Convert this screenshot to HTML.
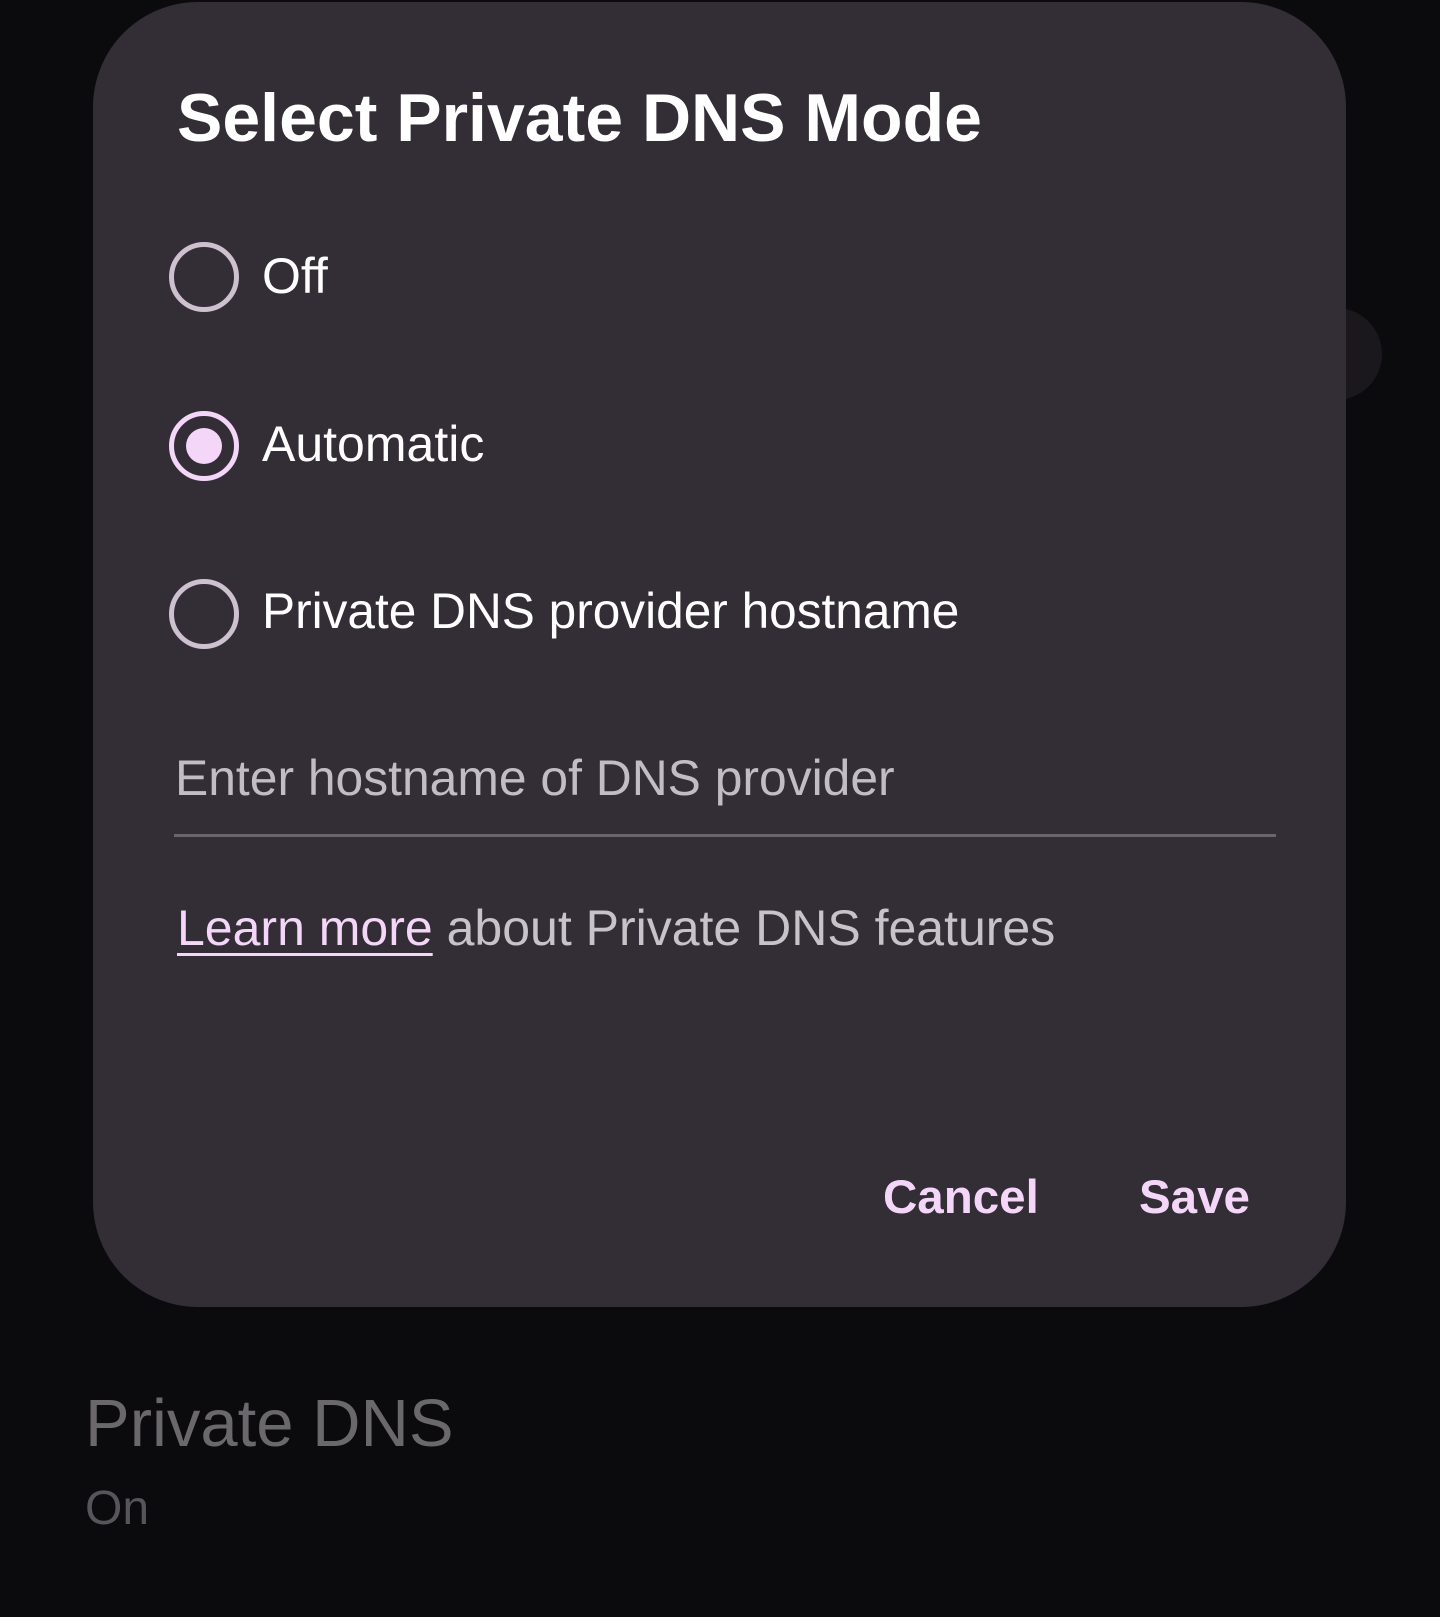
<!DOCTYPE html>
<html><head><style>
html,body{margin:0;padding:0;}
body{width:1440px;height:1617px;background:#0b0a0d;position:relative;overflow:hidden;font-family:"Liberation Sans",sans-serif;}
.t{position:absolute;white-space:nowrap;line-height:1;}
.dlg{position:absolute;left:93px;top:2px;width:1253px;height:1305px;background:#332d36;border-radius:105px;}
.r{position:absolute;width:70px;height:70px;border:5px solid #cdc0cf;border-radius:50%;box-sizing:border-box;}
</style></head><body>
<div style="position:absolute;left:1290px;top:308px;width:92px;height:92px;border-radius:50%;background:#1a181c"></div>
<div class="dlg"></div>
<div class="t" style="left:177px;top:84px;font-size:68px;color:#fff;font-weight:bold;">Select Private DNS Mode</div>

<div class="r" style="left:169px;top:242px;"></div>
<div class="t" style="left:262px;top:251px;font-size:50px;color:#fff;">Off</div>

<div class="r" style="left:169px;top:411px;border-color:#f4d6f8;"></div>
<div style="position:absolute;left:186px;top:428px;width:36px;height:36px;border-radius:50%;background:#f4d6f8;"></div>
<div class="t" style="left:262px;top:419px;font-size:50px;color:#fff;">Automatic</div>

<div class="r" style="left:169px;top:579px;"></div>
<div class="t" style="left:262px;top:587px;font-size:49.6px;color:#fff;">Private DNS provider hostname</div>

<div class="t" style="left:175px;top:754px;font-size:49.8px;color:#c3bcc4;">Enter hostname of DNS provider</div>
<div style="position:absolute;left:174px;top:834px;width:1102px;height:3px;background:#6a646c;"></div>

<div class="t" style="left:177px;top:903px;font-size:50px;color:#c9c2c9;"><span style="color:#f4d6f8;text-decoration:underline;text-decoration-thickness:3px;text-underline-offset:8px;">Learn more</span> about Private DNS features</div>

<div class="t" style="left:883px;top:1174px;font-size:47.5px;color:#f4d6f8;font-weight:bold;">Cancel</div>
<div class="t" style="left:1139px;top:1174px;font-size:47.5px;color:#f4d6f8;font-weight:bold;">Save</div>

<div class="t" style="left:85px;top:1390px;font-size:67px;color:#6b686b;">Private DNS</div>
<div class="t" style="left:85px;top:1485px;font-size:48px;color:#58555a;">On</div>
</body></html>
